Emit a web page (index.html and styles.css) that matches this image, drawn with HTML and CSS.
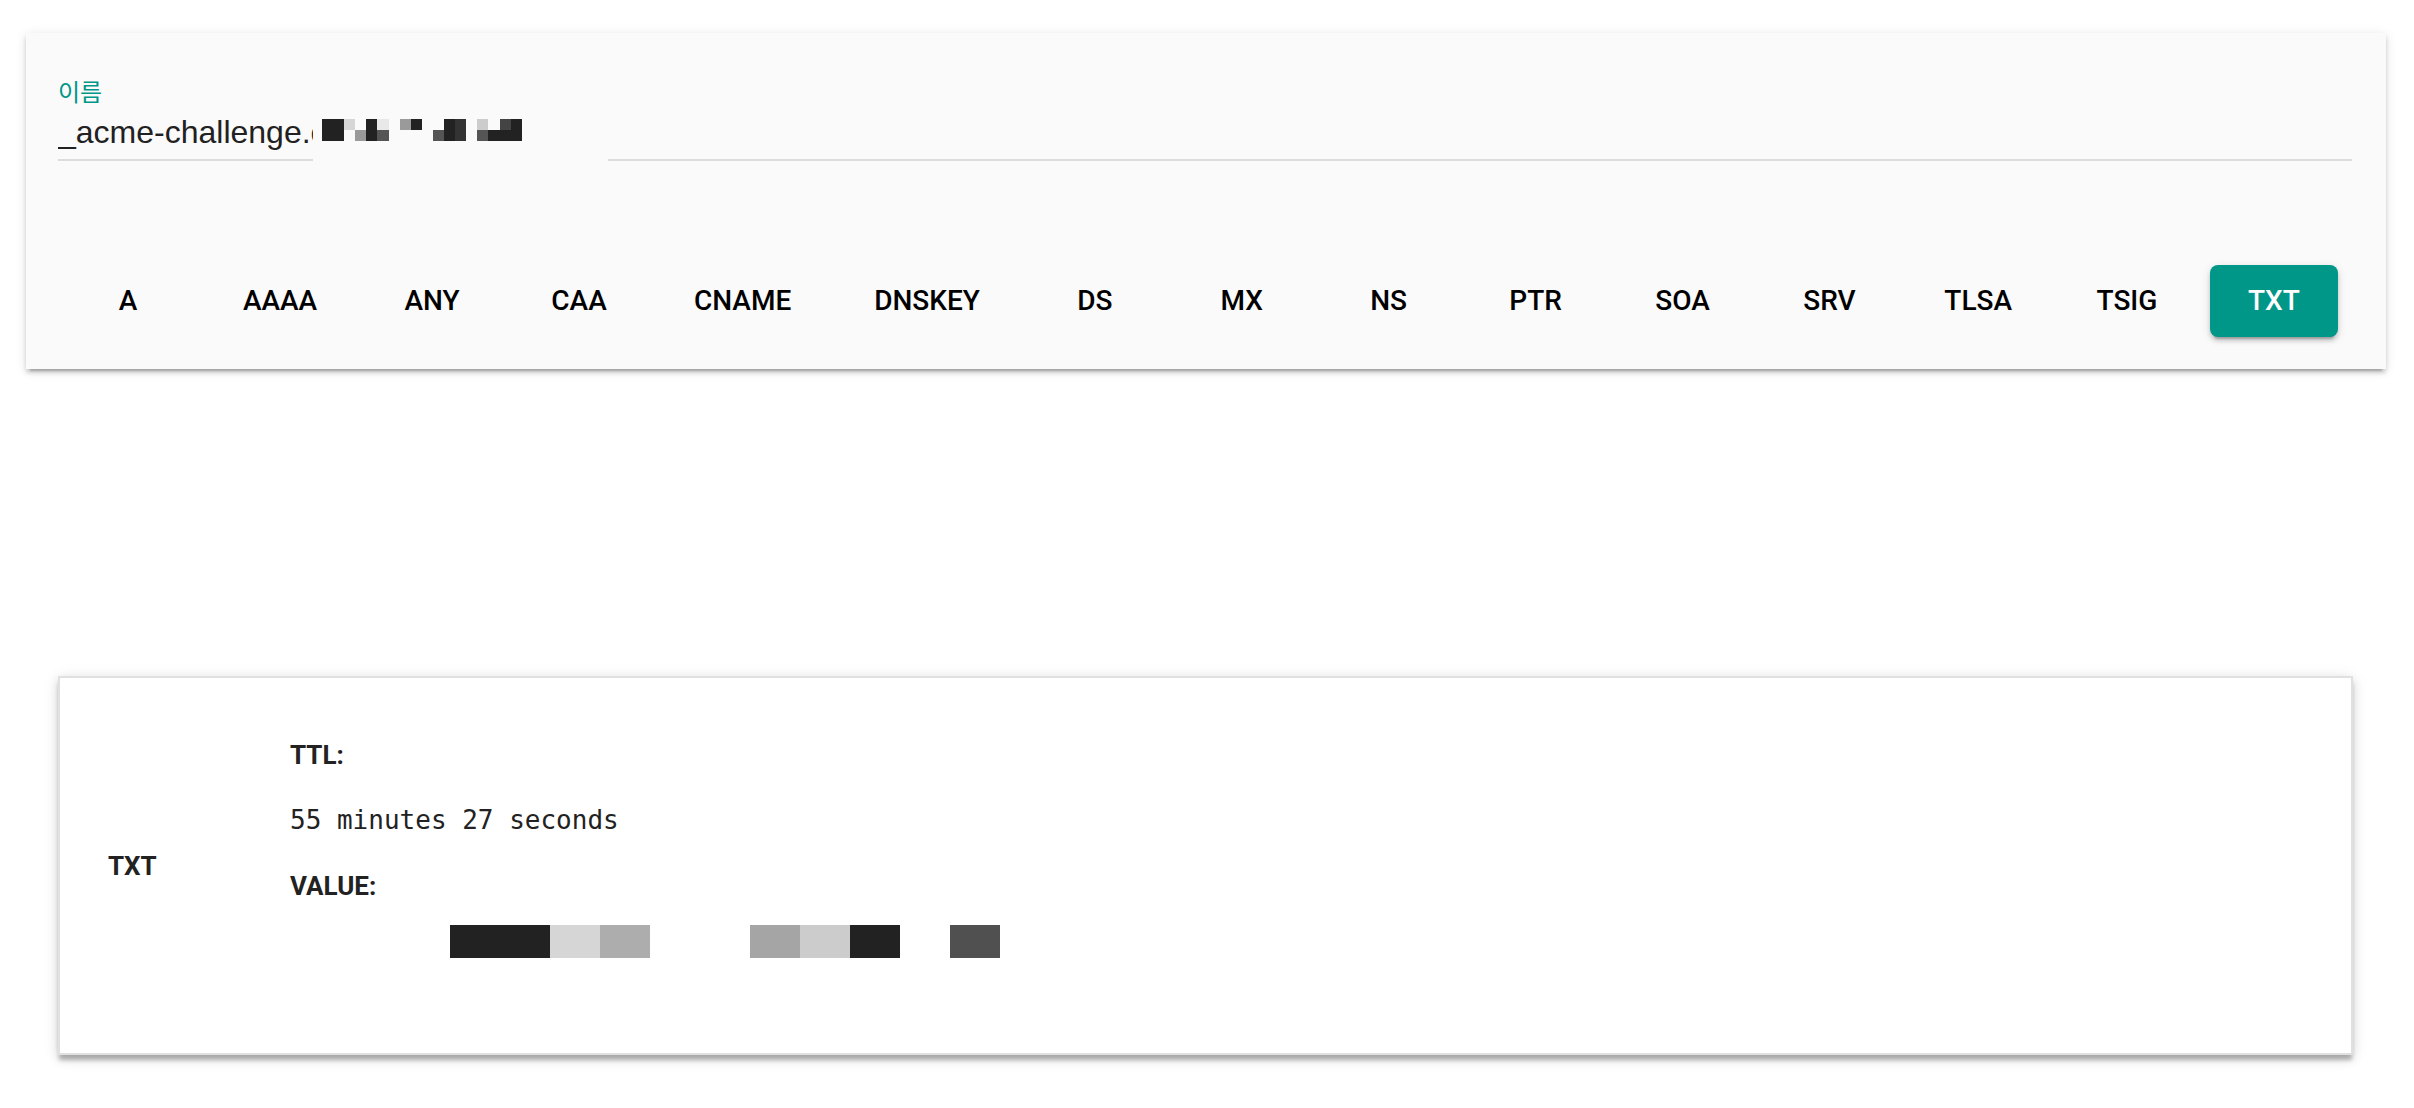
FILE: index.html
```html
<!DOCTYPE html>
<html lang="ko">
<head>
<meta charset="utf-8">
<title>DNS lookup</title>
<link rel="stylesheet" href="styles.css">
</head>
<body>
<div class="page">
  <section class="search-card">
    <div class="field">
      <div class="field-label">이름</div>
      <div class="field-input">_acme-challenge.com</div>
      <div class="redact">
        <i class="k"></i><i class="k"></i>
        <i class="k"></i><i class="k"></i>
        <i class="d5"></i><i></i>
        <i></i><i class="g9"></i>
        <i class="k"></i><i class="k"></i>
        <i class="e8"></i><i class="g5"></i>
        <i></i><i></i>
        <i class="g9"></i><i></i>
        <i class="k"></i><i></i>
        <i></i><i></i>
        <i></i><i class="g5"></i>
        <i class="k"></i><i class="k"></i>
        <i class="g3"></i><i class="g3"></i>
        <i></i><i></i>
        <i class="gc"></i><i class="g5"></i>
        <i></i><i class="k"></i>
        <i class="g4"></i><i class="k"></i>
        <i class="k"></i><i class="k"></i>
      </div>
    </div>
    <div class="types">
      <div class="type-btn">A</div>
      <div class="type-btn">AAAA</div>
      <div class="type-btn">ANY</div>
      <div class="type-btn">CAA</div>
      <div class="type-btn">CNAME</div>
      <div class="type-btn">DNSKEY</div>
      <div class="type-btn">DS</div>
      <div class="type-btn">MX</div>
      <div class="type-btn">NS</div>
      <div class="type-btn">PTR</div>
      <div class="type-btn">SOA</div>
      <div class="type-btn">SRV</div>
      <div class="type-btn">TLSA</div>
      <div class="type-btn">TSIG</div>
      <div class="type-btn active">TXT</div>
    </div>
  </section>

  <section class="record">
    <div class="rec-type">TXT</div>
    <div class="rec-body">
      <div class="rec-label">TTL:</div>
      <div class="rec-ttl">55 minutes 27 seconds</div>
      <div class="rec-label value-label">VALUE:</div>
      <div class="rec-value">
        <i class="b k wide"></i><i class="b d5"></i><i class="b ga"></i><i class="b gap2"></i><i class="b ga5"></i><i class="b gc"></i><i class="b k"></i><i class="b gap1"></i><i class="b g50"></i>
      </div>
    </div>
  </section>
</div>
</body>
</html>
```

FILE: styles.css
```css
* { box-sizing: border-box; }

html, body {
  margin: 0;
  background: #ffffff;
}

body {
  font-family: Roboto, "Noto Sans", sans-serif;
  color: #212121;
}

.page {
  padding: 33px 28px 40px 26px;
}

/* ---------- search card ---------- */
.search-card {
  background: #fafafa;
  padding: 43px 34px 32px 32px;
  box-shadow: 0 6px 2px -4px rgba(0,0,0,0.2),
              0 4px 4px 0 rgba(0,0,0,0.14),
              0 2px 10px 0 rgba(0,0,0,0.12);
}

.field {
  position: relative;
}

.field-label {
  font-family: "Noto Sans CJK KR", "Noto Sans", sans-serif;
  font-size: 24px;
  line-height: 30px;
  color: #009688;
}

.field-input {
  margin-top: 6px;
  font-family: "Liberation Sans", Arial, sans-serif;
  font-size: 32px;
  line-height: 40px;
  color: #212121;
  padding-bottom: 7px;
  border-bottom: 2px solid #dcdcdc;
  white-space: nowrap;
  overflow: hidden;
}

.redact {
  position: absolute;
  left: 255px;
  top: 32px;
  width: 295px;
  height: 58px;
  background: #fafafa;
  padding: 11px 0 0 9px;
  display: grid;
  grid-template-rows: repeat(2, 11px);
  grid-auto-columns: 11.1px;
  grid-auto-flow: column;
}

.redact i { display: block; }

.k { background: #222222; }
.d5 { background: #d6d6d6; }
.e8 { background: #e8e8e8; }
.g9 { background: #9a9a9a; }
.g5 { background: #555555; }
.g3 { background: #333333; }
.g4 { background: #444444; }
.gc { background: #cccccc; }
.ga { background: #adadad; }
.ga5 { background: #a5a5a5; }
.g50 { background: #505050; }

/* ---------- type buttons ---------- */
.types {
  margin-top: 104px;
  display: flex;
  justify-content: space-between;
  padding: 0 14px 0 6px;
}

.type-btn {
  min-width: 128px;
  height: 72px;
  padding: 0 32px;
  font-family: Roboto, sans-serif;
  font-weight: 500;
  font-size: 28px;
  line-height: 72px;
  text-align: center;
  color: #000000;
  border-radius: 8px;
}

.type-btn.active {
  background: #009688;
  color: #ffffff;
  box-shadow: 0 6px 2px -4px rgba(0,0,0,0.2),
              0 4px 4px 0 rgba(0,0,0,0.14),
              0 2px 10px 0 rgba(0,0,0,0.12);
}

/* ---------- record card ---------- */
.record {
  margin: 307px 0 0 32px;
  width: 2295px;
  background: #ffffff;
  border: 2px solid #e0e0e0;
  box-shadow: 0 6px 4px -1px rgba(0,0,0,0.24),
              0 4px 10px 0 rgba(0,0,0,0.12),
              0 2px 16px 0 rgba(0,0,0,0.08);
  display: grid;
  grid-template-columns: 182px 1fr;
  align-items: center;
  padding-left: 48px;
}

.rec-type,
.rec-label {
  font-family: Roboto, sans-serif;
  font-weight: 700;
  font-size: 26px;
  line-height: 32px;
  color: #222222;
}

.rec-body {
  padding: 61px 0 95px;
}

.rec-ttl {
  margin-top: 33px;
  font-family: "DejaVu Sans Mono", "Liberation Mono", monospace;
  font-size: 26px;
  line-height: 32px;
  color: #222222;
}

.value-label {
  margin-top: 34px;
}

.rec-value {
  margin-top: 23px;
  padding-left: 160px;
  display: flex;
  height: 33px;
}

.rec-value .b {
  display: block;
  width: 50px;
  height: 33px;
}

.rec-value .wide { width: 100px; }
.rec-value .gap2 { width: 100px; background: transparent; }
.rec-value .gap1 { width: 50px; background: transparent; }
```
